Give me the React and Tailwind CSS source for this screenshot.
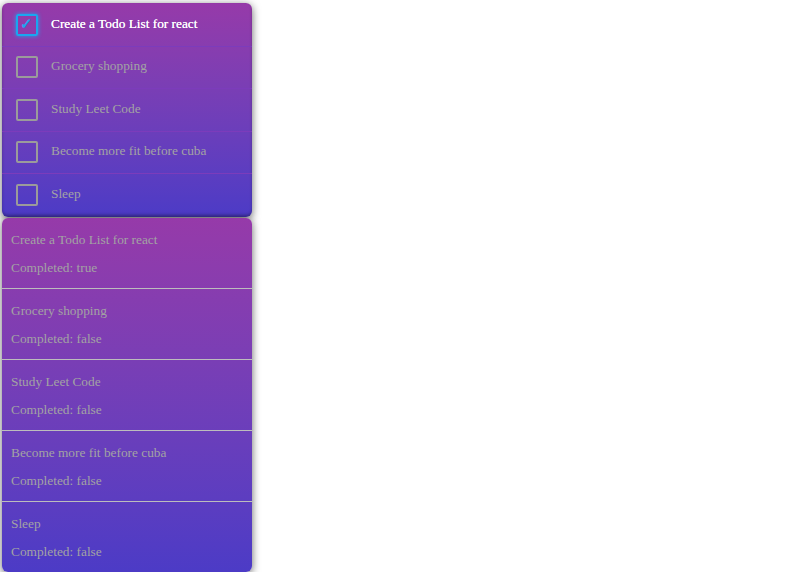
import React, { useState } from 'react';

const initialTodos = [
    { id: 1, text: 'Create a Todo List for react', completed: true },
    { id: 2, text: 'Grocery shopping', completed: false },
    { id: 3, text: 'Study Leet Code', completed: false },
    { id: 4, text: 'Become more fit before cuba', completed: false },
    { id: 5, text: 'Sleep', completed: false },
];

const TodoItem = ({ todo, last, onToggle }) => (
    <div className={`h-[42.5px] flex items-center ${last ? '' : 'border-b border-[#7c3cbb]'}`}>
        <button
            onClick={() => onToggle(todo.id)}
            className={`ml-[14px] w-[22px] h-[22px] rounded-[2px] border-2 flex items-center justify-start pl-[2px] leading-none ${
                todo.completed
                    ? 'border-[#1aa6f0] shadow-[0_0_4px_#1aa6f0] text-[#1aa6f0]'
                    : 'border-[#9b9b9b]'
            }`}
        >
            {todo.completed ? <span className="text-[15px] font-bold">✓</span> : null}
        </button>
        <span className={`ml-[13px] mb-[2px] text-[13.33px] ${todo.completed ? 'text-white [text-shadow:0_0_0.4px_#fff]' : 'text-[#a3a3a3]'}`}>
            {todo.text}
        </span>
    </div>
);

export default function App() {
    const [todos, setTodos] = useState(initialTodos);

    const toggle = (id) =>
        setTodos(todos.map(t => (t.id === id ? { ...t, completed: !t.completed } : t)));

    return (
        <div className="pt-[3px] pl-[2px] font-['Liberation_Serif',serif]">
            <div className="w-[250px] rounded-[6px] pt-[1px] bg-gradient-to-b from-[#963aa9] to-[#4c3bc6] shadow-[0_2px_8px_rgba(0,0,0,0.6),inset_0_-2px_3px_rgba(0,0,0,0.25)]">
                {todos.map((todo, i) => (
                    <TodoItem key={todo.id} todo={todo} last={i === todos.length - 1} onToggle={toggle} />
                ))}
            </div>
            <div className="mt-[1.5px] w-[250px] rounded-[6px] bg-gradient-to-b from-[#963aa9] to-[#4c3bc6] shadow-[0_2px_8px_rgba(0,0,0,0.6)]">
                {todos.map((todo, i) => (
                    <div
                        key={todo.id}
                        className={`px-[9px] pt-[13.5px] pb-[13.5px] flex flex-col gap-[13px] text-[13.33px] leading-[15px] text-[#a3a3a3] ${
                            i === todos.length - 1 ? '' : 'border-b border-[#bdbdbd]'
                        }`}
                    >
                        <p>{todo.text}</p>
                        <p>Completed: {String(todo.completed)}</p>
                    </div>
                ))}
            </div>
        </div>
    );
}
